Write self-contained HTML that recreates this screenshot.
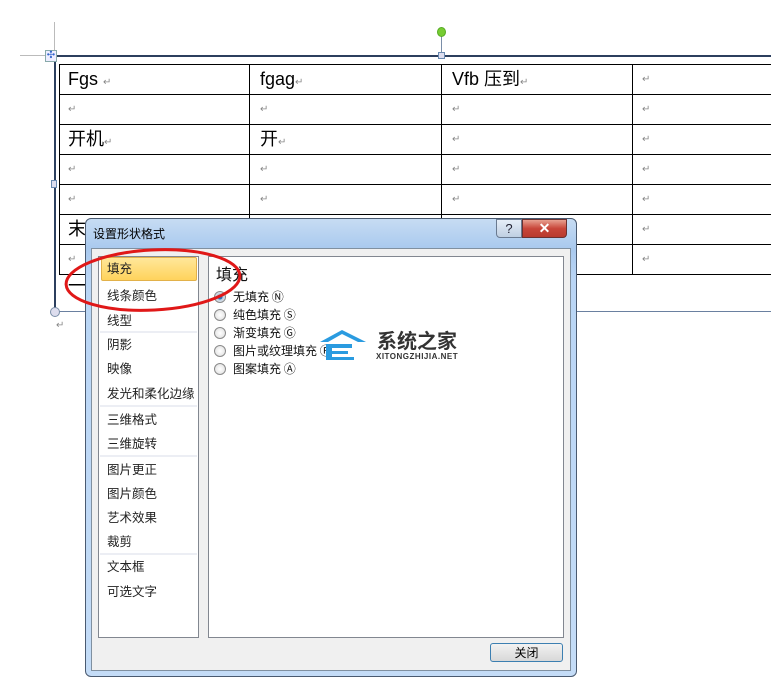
<!DOCTYPE html>
<html><head><meta charset="utf-8"><style>
*{margin:0;padding:0;box-sizing:border-box}
body{width:771px;height:700px;background:#fff;position:relative;overflow:hidden;font-family:"Liberation Sans","Noto Sans CJK SC",sans-serif}
.a{position:absolute}
.h{position:absolute;height:1px;background:#000}
.v{position:absolute;width:1px;background:#000}
.t{position:absolute;font-size:18px;color:#000;line-height:20px}
.r{position:absolute;font-size:10px;color:#888}
.it{position:absolute;left:107px;font-size:12.5px;color:#222;font-family:"Noto Sans CJK SC",sans-serif}
.sep{position:absolute;left:100px;width:97px;height:2px;background:#eceef4}
.rad{position:absolute;left:214px;width:12px;height:12px;border-radius:50%;border:1px solid #8a8a8a;background:radial-gradient(#fff,#ddd)}
.ro{position:absolute;left:233px;font-size:12px;color:#111;font-family:"Noto Sans CJK SC",sans-serif}
</style></head><body>
<div class="a" style="left:54px;top:22px;width:1px;height:34px;background:#bbb"></div>
<div class="a" style="left:20px;top:55px;width:34px;height:1px;background:#bbb"></div>
<div class="a" style="left:55px;top:55px;width:716px;height:2px;background:#2c3f5e"></div>
<div class="a" style="left:54px;top:56px;width:2px;height:256px;background:#2c3f5e"></div>
<div class="a" style="left:55px;top:311px;width:716px;height:1px;background:#6a80a0"></div>
<div class="a" style="left:45px;top:50px;width:12px;height:12px;border:1px solid #8aa;background:#eef;color:#36c;font-size:10px;line-height:10px;text-align:center">✣</div>
<div class="a" style="left:441px;top:35px;width:1px;height:18px;background:#7a8ea8"></div>
<div class="a" style="left:437px;top:27px;width:9px;height:10px;border-radius:50%;background:#7c3;border:1px solid #5a2"></div>
<div class="a" style="left:438px;top:52px;width:7px;height:7px;border:1px solid #6a8ab0;background:#dde"></div>
<div class="a" style="left:51px;top:180px;width:6px;height:8px;border:1px solid #6a8ab0;background:#dde"></div>
<div class="a" style="left:50px;top:307px;width:10px;height:10px;border-radius:50%;border:1px solid #7a8ea8;background:#dde"></div>
<div class="r" style="left:56px;top:320px">↵</div>
<div class="h" style="left:59px;top:64px;width:712px"></div>
<div class="h" style="left:59px;top:94px;width:712px"></div>
<div class="h" style="left:59px;top:124px;width:712px"></div>
<div class="h" style="left:59px;top:154px;width:712px"></div>
<div class="h" style="left:59px;top:184px;width:712px"></div>
<div class="h" style="left:59px;top:214px;width:712px"></div>
<div class="h" style="left:59px;top:244px;width:712px"></div>
<div class="h" style="left:59px;top:274px;width:712px"></div>
<div class="v" style="left:59px;top:64px;height:210px"></div>
<div class="v" style="left:249px;top:64px;height:210px"></div>
<div class="v" style="left:441px;top:64px;height:210px"></div>
<div class="v" style="left:632px;top:64px;height:210px"></div>
<div class="t" style="left:68px;top:69px">Fgs <span style="font-size:10px;color:#888">↵</span></div>
<div class="t" style="left:260px;top:69px">fgag<span style="font-size:10px;color:#888">↵</span></div>
<div class="t" style="left:452px;top:69px">Vfb 压到<span style="font-size:10px;color:#888">↵</span></div>
<div class="t" style="left:68px;top:129px">开机<span style="font-size:10px;color:#888">↵</span></div>
<div class="t" style="left:260px;top:129px">开<span style="font-size:10px;color:#888">↵</span></div>
<div class="t" style="left:68px;top:219px">末</div>
<div class="t" style="left:68px;top:276px">一</div>
<div class="r" style="left:642px;top:74px">↵</div>
<div class="r" style="left:68px;top:104px">↵</div><div class="r" style="left:260px;top:104px">↵</div><div class="r" style="left:452px;top:104px">↵</div><div class="r" style="left:642px;top:104px">↵</div>
<div class="r" style="left:452px;top:134px">↵</div><div class="r" style="left:642px;top:134px">↵</div>
<div class="r" style="left:68px;top:164px">↵</div><div class="r" style="left:260px;top:164px">↵</div><div class="r" style="left:452px;top:164px">↵</div><div class="r" style="left:642px;top:164px">↵</div>
<div class="r" style="left:68px;top:194px">↵</div><div class="r" style="left:260px;top:194px">↵</div><div class="r" style="left:452px;top:194px">↵</div><div class="r" style="left:642px;top:194px">↵</div>
<div class="r" style="left:642px;top:224px">↵</div><div class="r" style="left:68px;top:254px">↵</div><div class="r" style="left:642px;top:254px">↵</div>
<div class="a" style="left:85px;top:218px;width:492px;height:459px;border:1px solid #4a5a70;border-radius:6px;background:linear-gradient(#c7dcf3,#a9c9ee 30px,#b9d5f5 60px,#c4dcf7)"></div>
<div class="a" style="left:93px;top:225px;font-size:12px;color:#000;font-family:'Noto Sans CJK SC',sans-serif">设置形状格式</div>
<div class="a" style="left:496px;top:219px;width:26px;height:19px;border:1px solid #6a7a90;border-radius:0 0 0 4px;background:linear-gradient(#e6eef8,#bfcfe2);text-align:center;font-size:13px;line-height:17px;color:#223">?</div>
<div class="a" style="left:522px;top:219px;width:45px;height:19px;border:1px solid #6a3030;border-radius:0 0 4px 0;background:linear-gradient(#e8a090,#c8463a 50%,#b83a2e);text-align:center;font-size:14px;font-weight:bold;line-height:17px;color:#fff">✕</div>
<div class="a" style="left:91px;top:248px;width:480px;height:423px;background:#f0f0f0;border:1px solid #8090a0"></div>
<div class="a" style="left:98px;top:256px;width:101px;height:382px;background:#fff;border:1px solid #828790"></div>
<div class="a" style="left:208px;top:256px;width:356px;height:382px;background:#fff;border:1px solid #828790"></div>
<div class="a" style="left:101px;top:257px;width:96px;height:24px;border:1px solid #e2b14a;border-radius:2px;background:linear-gradient(#ffe79a,#ffd35c)"></div>
<div class="it" style="top:258px">填充</div>
<div class="it" style="top:285px">线条颜色</div>
<div class="it" style="top:310px">线型</div>
<div class="sep" style="top:331px"></div>
<div class="it" style="top:334px">阴影</div>
<div class="it" style="top:358px">映像</div>
<div class="it" style="top:383px">发光和柔化边缘</div>
<div class="sep" style="top:405px"></div>
<div class="it" style="top:409px">三维格式</div>
<div class="it" style="top:433px">三维旋转</div>
<div class="sep" style="top:455px"></div>
<div class="it" style="top:459px">图片更正</div>
<div class="it" style="top:483px">图片颜色</div>
<div class="it" style="top:507px">艺术效果</div>
<div class="it" style="top:531px">裁剪</div>
<div class="sep" style="top:553px"></div>
<div class="it" style="top:556px">文本框</div>
<div class="it" style="top:581px">可选文字</div>
<div class="a" style="left:216px;top:261px;font-size:16px;color:#111;font-family:'Noto Sans CJK SC',sans-serif">填充</div>
<div class="rad" style="top:291px;background:radial-gradient(#2a6fb8 30%,#bcd 40%,#fff)"></div><div class="ro" style="top:288px">无填充 Ⓝ</div>
<div class="rad" style="top:309px"></div><div class="ro" style="top:306px">纯色填充 Ⓢ</div>
<div class="rad" style="top:327px"></div><div class="ro" style="top:324px">渐变填充 Ⓖ</div>
<div class="rad" style="top:345px"></div><div class="ro" style="top:342px">图片或纹理填充 Ⓕ</div>
<div class="rad" style="top:363px"></div><div class="ro" style="top:360px">图案填充 Ⓐ</div>
<svg class="a" style="left:318px;top:328px" width="50" height="34"><path d="M2 14 L24 2 L48 14 L40 14 L24 6 L10 14Z M8 16 H34 V20 H14 V23 H30 V26 H14 V29 H36 V32 H8Z" fill="#2a9be0"/></svg>
<div class="a" style="left:377px;top:328px;font-size:20px;font-weight:bold;color:#333;font-family:'Noto Sans CJK SC',sans-serif;line-height:24px">系统之家</div>
<div class="a" style="left:376px;top:352px;font-size:8px;font-weight:bold;color:#333;letter-spacing:0.5px">XITONGZHIJIA.NET</div>
<div class="a" style="left:490px;top:643px;width:73px;height:19px;border:1px solid #3c7fb1;border-radius:3px;background:linear-gradient(#f2f2f2,#d8d8d8);text-align:center;font-size:12px;line-height:17px;font-family:'Noto Sans CJK SC',sans-serif">关闭</div>
<svg class="a" style="left:60px;top:245px" width="190" height="72"><ellipse cx="93" cy="35" rx="87" ry="30" fill="none" stroke="#e01818" stroke-width="3" transform="rotate(-3 93 35)"/></svg>
</body></html>
